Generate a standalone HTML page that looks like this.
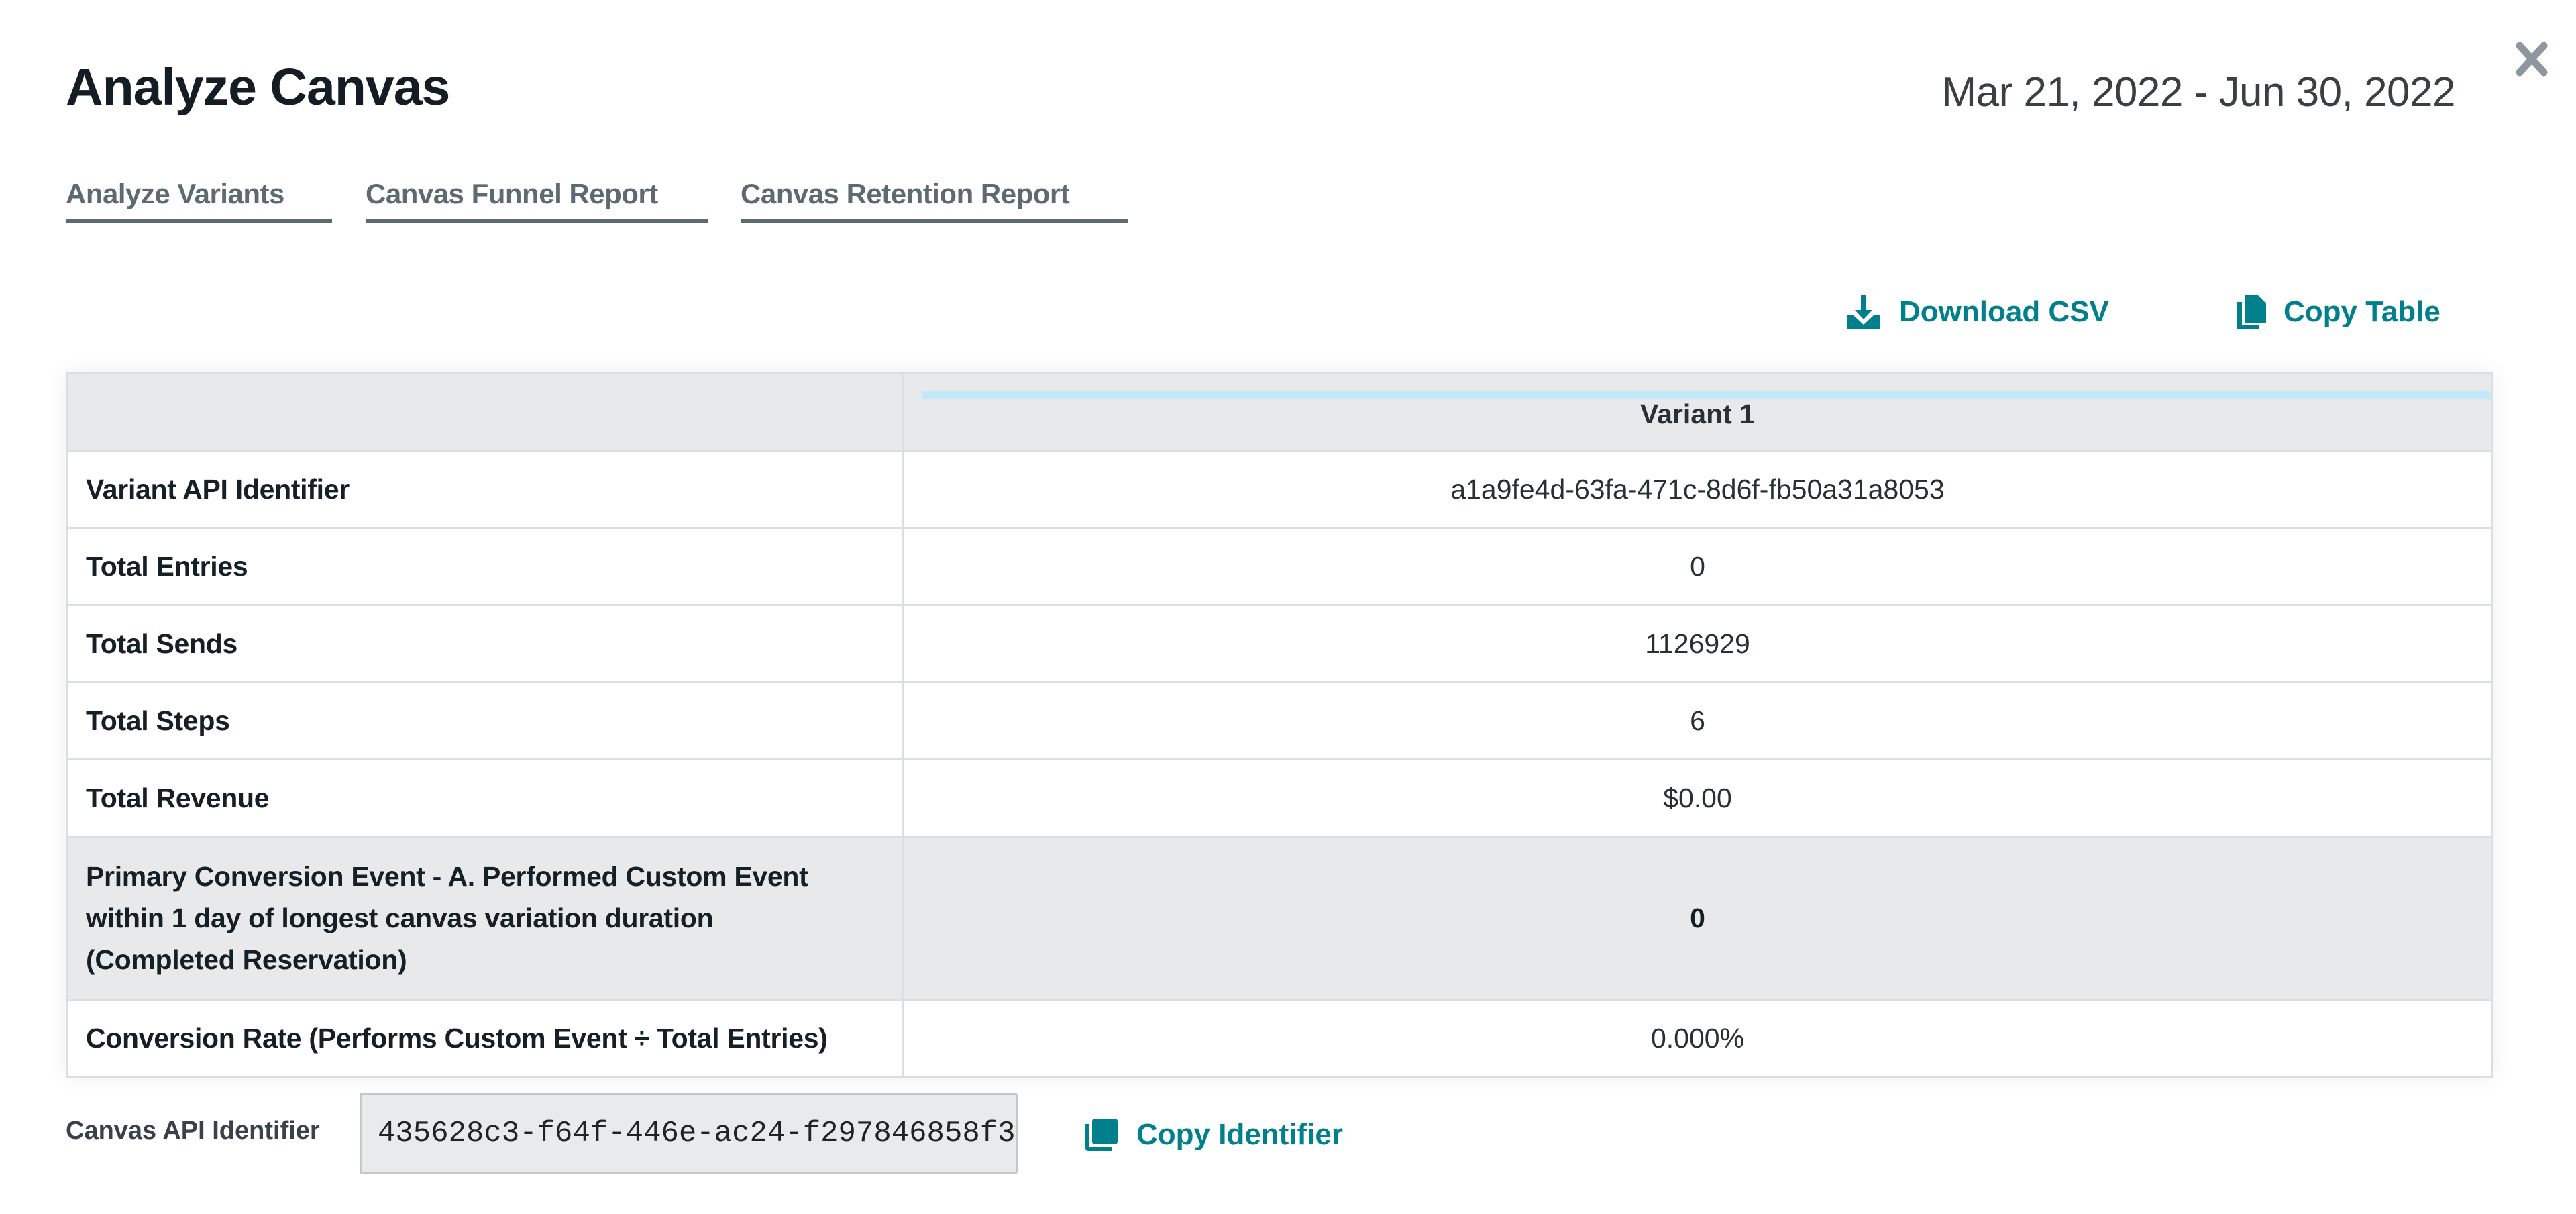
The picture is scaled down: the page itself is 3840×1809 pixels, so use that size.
<!DOCTYPE html>
<html><head><meta charset="utf-8"><style>
*{margin:0;padding:0;box-sizing:border-box}
body{width:3840px;height:1809px;background:#fff;font-family:"Liberation Sans",sans-serif;position:relative;overflow:hidden;color:#161e26}
.abs{position:absolute}
h1{position:absolute;left:98px;top:86px;font-size:77px;font-weight:bold;letter-spacing:-1px;color:#141c24}
.date{position:absolute;right:180px;top:102px;font-size:62px;color:#3a3f44;font-weight:300;letter-spacing:-0.5px}
.close{position:absolute;left:3748px;top:60px;width:52px;height:56px}
.tab{position:absolute;top:265px;font-size:42px;font-weight:bold;color:#5e6a72;border-bottom:6px solid #5e6a72;height:68px;letter-spacing:-0.5px}
.act{position:absolute;top:440px;font-size:44px;font-weight:bold;color:#007f8c;display:flex;align-items:center}
table{position:absolute;left:98px;top:555px;width:3618px;border-collapse:collapse;box-shadow:0 0 30px rgba(0,0,0,0.07);font-size:41px}
td{border:3px solid #dcdfe2;height:115px;padding:0 27px}
td.l{width:1247px;font-weight:bold;color:#161e26;letter-spacing:-0.3px}
td.v{text-align:center;color:#2a2f34}
tr.g td{background:#e8e9eb}
</style></head><body>
<h1>Analyze Canvas</h1>
<div class="date">Mar 21, 2022 - Jun 30, 2022</div>
<svg class="close" viewBox="0 0 52 56"><path d="M8 8 L44 48 M44 8 L8 48" stroke="#8e979d" stroke-width="11" stroke-linecap="round"/></svg>
<div class="tab" style="left:98px;width:397px">Analyze Variants</div>
<div class="tab" style="left:545px;width:510px">Canvas Funnel Report</div>
<div class="tab" style="left:1104px;width:578px">Canvas Retention Report</div>
<div class="act" style="left:2753px"><svg width="50" height="50" viewBox="0 0 50 50"><path d="M21 0h8v22h9L25 36 12 22h9z" fill="#007f8c"/><path d="M0 30h10l15 14 15-14h10v20H0z" fill="#007f8c"/></svg><span style="margin-left:28px">Download CSV</span></div>
<div class="act" style="left:3334px"><svg width="44" height="50" viewBox="0 0 44 50"><path d="M12 0h20l12 12v30H12z" fill="#007f8c"/><path d="M0 10h8v34h26v6H0z" fill="#007f8c"/></svg><span style="margin-left:26px">Copy Table</span></div>
<table>
<tr class="g"><td class="l"></td><td class="v" style="position:relative;font-weight:bold;color:#2a2f34;padding-top:6px"><div class="abs" style="left:27px;right:0;top:25px;height:12px;background:#c3e8f7"></div>Variant 1</td></tr>
<tr><td class="l">Variant API Identifier</td><td class="v">a1a9fe4d-63fa-471c-8d6f-fb50a31a8053</td></tr>
<tr><td class="l">Total Entries</td><td class="v">0</td></tr>
<tr><td class="l">Total Sends</td><td class="v">1126929</td></tr>
<tr><td class="l">Total Steps</td><td class="v">6</td></tr>
<tr><td class="l">Total Revenue</td><td class="v">$0.00</td></tr>
<tr class="g"><td class="l" style="height:243px;line-height:62px;white-space:nowrap">Primary Conversion Event - A. Performed Custom Event<br>within 1 day of longest canvas variation duration<br>(Completed Reservation)</td><td class="v" style="font-weight:bold;color:#161e26">0</td></tr>
<tr><td class="l">Conversion Rate (Performs Custom Event ÷ Total Entries)</td><td class="v">0.000%</td></tr>
</table>
<div class="abs" style="left:98px;top:1664px;font-size:38px;font-weight:bold;color:#3a4148">Canvas API Identifier</div>
<div class="abs" style="left:536px;top:1628px;width:981px;height:122px;background:#e9eaec;border:3px solid #c3c7cb;border-radius:4px;font-family:'Liberation Mono',monospace;font-size:44px;color:#222;line-height:116px;padding-left:24px">435628c3-f64f-446e-ac24-f297846858f3</div>
<div class="act" style="left:1618px;top:1666px"><svg width="48" height="48" viewBox="0 0 48 48"><rect x="10" y="0" width="38" height="38" rx="4" fill="#007f8c"/><path d="M0 8h6v34h34v6H4a4 4 0 0 1-4-4z" fill="#007f8c"/></svg><span style="margin-left:28px">Copy Identifier</span></div>
</body></html>
